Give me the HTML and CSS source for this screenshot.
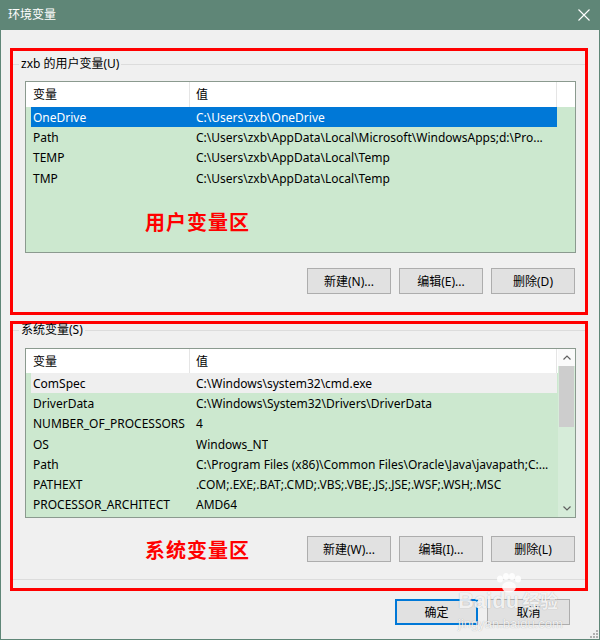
FILE: index.html
```html
<!DOCTYPE html>
<html lang="zh-CN">
<head>
    <meta charset="UTF-8">
    <meta name="viewport" content="width=device-width, initial-scale=1.0">
    <title>环境变量</title>
    <link rel="stylesheet" href="styles.css">
</head>
<body>
    <div class="window">
        <div class="titlebar">
            <span class="title">环境变量</span>
            <svg class="close" width="12" height="12" viewBox="0 0 12 12">
                <path d="M0.5 0.5 L11.5 11.5 M11.5 0.5 L0.5 11.5" stroke="#fff" stroke-width="1.1" fill="none"/>
            </svg>
        </div>

        <div class="content">
            <div class="mark mark-user">
                <fieldset class="group">
                    <legend>zxb 的用户变量(U)</legend>
                    <div class="list">
                        <div class="list-head">
                            <div class="hcol hcol-name">变量</div>
                            <div class="hcol hcol-value">值</div>
                            <div class="hcol hcol-fill"></div>
                        </div>
                        <div class="rows">
                            <div class="row selected"><span class="cell-name">OneDrive</span><span class="cell-value">C:\Users\zxb\OneDrive</span></div>
                            <div class="row"><span class="cell-name">Path</span><span class="cell-value">C:\Users\zxb\AppData\Local\Microsoft\WindowsApps;d:\Pro...</span></div>
                            <div class="row"><span class="cell-name">TEMP</span><span class="cell-value">C:\Users\zxb\AppData\Local\Temp</span></div>
                            <div class="row"><span class="cell-name">TMP</span><span class="cell-value">C:\Users\zxb\AppData\Local\Temp</span></div>
                        </div>
                        <div class="zone-label zone-label-user">用户变量区</div>
                    </div>
                    <div class="buttons">
                        <button class="btn">新建(N)...</button>
                        <button class="btn">编辑(E)...</button>
                        <button class="btn">删除(D)</button>
                    </div>
                </fieldset>
            </div>

            <div class="mark mark-system">
                <fieldset class="group group-system">
                    <legend>系统变量(S)</legend>
                    <div class="list list-system">
                        <div class="list-main">
                            <div class="list-head">
                                <div class="hcol hcol-name">变量</div>
                                <div class="hcol hcol-value">值</div>
                            </div>
                            <div class="rows">
                                <div class="row inactive"><span class="cell-name">ComSpec</span><span class="cell-value">C:\Windows\system32\cmd.exe</span></div>
                                <div class="row"><span class="cell-name">DriverData</span><span class="cell-value">C:\Windows\System32\Drivers\DriverData</span></div>
                                <div class="row"><span class="cell-name">NUMBER_OF_PROCESSORS</span><span class="cell-value">4</span></div>
                                <div class="row"><span class="cell-name">OS</span><span class="cell-value">Windows_NT</span></div>
                                <div class="row"><span class="cell-name">Path</span><span class="cell-value">C:\Program Files (x86)\Common Files\Oracle\Java\javapath;C:...</span></div>
                                <div class="row"><span class="cell-name">PATHEXT</span><span class="cell-value">.COM;.EXE;.BAT;.CMD;.VBS;.VBE;.JS;.JSE;.WSF;.WSH;.MSC</span></div>
                                <div class="row"><span class="cell-name">PROCESSOR_ARCHITECT</span><span class="cell-value">AMD64</span></div>
                            </div>
                        </div>
                        <div class="vscroll">
                            <div class="arrow arrow-up">
                                <svg width="8" height="5" viewBox="0 0 8 5"><path d="M0.5 4.5 L4 1 L7.5 4.5" stroke="#606060" stroke-width="1.2" fill="none"/></svg>
                            </div>
                            <div class="thumb"></div>
                            <div class="track"></div>
                            <div class="arrow arrow-down">
                                <svg width="8" height="5" viewBox="0 0 8 5"><path d="M0.5 0.5 L4 4 L7.5 0.5" stroke="#606060" stroke-width="1.2" fill="none"/></svg>
                            </div>
                        </div>
                    </div>
                    <div class="buttons">
                        <div class="zone-label zone-label-system">系统变量区</div>
                        <button class="btn">新建(W)...</button>
                        <button class="btn">编辑(I)...</button>
                        <button class="btn">删除(L)</button>
                    </div>
                </fieldset>
            </div>

            <div class="actions">
                <button class="btn btn-default">确定</button>
                <button class="btn">取消</button>
            </div>

            <svg class="grip" width="10" height="10" viewBox="0 0 10 10">
                <rect x="8" y="2" width="2" height="2" fill="#b0b0b0"/>
                <rect x="5" y="5" width="2" height="2" fill="#b0b0b0"/>
                <rect x="8" y="5" width="2" height="2" fill="#b0b0b0"/>
                <rect x="2" y="8" width="2" height="2" fill="#b0b0b0"/>
                <rect x="5" y="8" width="2" height="2" fill="#b0b0b0"/>
                <rect x="8" y="8" width="2" height="2" fill="#b0b0b0"/>
            </svg>
        </div>

        <div class="watermark">
            <svg class="paw" width="32" height="20" viewBox="0 0 32 20">
                <ellipse cx="8" cy="6" rx="3" ry="3.5" fill="rgba(255,255,255,0.85)"/>
                <ellipse cx="14" cy="3.5" rx="3" ry="3.5" fill="rgba(255,255,255,0.85)"/>
                <ellipse cx="20" cy="3.5" rx="3" ry="3.5" fill="rgba(255,255,255,0.85)"/>
                <ellipse cx="26" cy="6" rx="3" ry="3.5" fill="rgba(255,255,255,0.85)"/>
                <ellipse cx="17" cy="14" rx="7" ry="5.5" fill="rgba(255,255,255,0.85)"/>
            </svg>
            <div class="wm-brand">Baidu<span class="wm-cn">经验</span></div>
            <div class="wm-url">jingyan.baidu.com</div>
        </div>
    </div>
</body>
</html>
```

FILE: styles.css
```css
* {
    box-sizing: border-box;
}

body {
    margin: 0;
    font-family: "Noto Sans", "Noto Sans CJK SC", sans-serif;
    font-size: 12px;
    color: #000;
}

.window {
    width: 600px;
    height: 640px;
    display: flex;
    flex-direction: column;
    position: relative;
    overflow: hidden;
}

.titlebar {
    height: 30px;
    flex-shrink: 0;
    background-color: #5f8677;
    color: #fff;
    display: flex;
    align-items: center;
    justify-content: space-between;
    padding: 0 10px 0 8px;
}

.title {
    font-size: 12px;
    line-height: 14px;
}

.content {
    flex: 1;
    background-color: #f0f0f0;
    border: 1px solid #5f8677;
    border-top: none;
    padding: 18px 0 0 9px;
    position: relative;
}

/* red annotation frames */
.mark {
    width: 578px;
    border: 3px solid #ff0000;
}

.mark-user {
    padding-top: 7px;
}

.mark-system {
    margin-top: 6px;
    padding-bottom: 8px;
}

/* group boxes */
.group {
    margin: 0;
    min-width: 0;
    border: none;
    border-top: 1px solid #dcdcdc;
    padding: 11px 9px 18px 12px;
}

.group-system {
    border-bottom: 1px solid #dcdcdc;
    padding-top: 12px;
    padding-bottom: 16px;
}

legend {
    padding: 0 2px;
    margin-left: -6px;
    font-size: 12px;
    line-height: 12px;
    color: #000;
}

/* list views */
.list {
    position: relative;
    height: 172px;
    border: 1px solid #8b9a8f;
    background-color: #cce8cf;
    overflow: hidden;
}

.list-system {
    height: 170px;
    display: flex;
}

.list-main {
    flex: 1;
    min-width: 0;
}

.list-head {
    display: flex;
    height: 25px;
    background-color: #fff;
}

.list-system .list-head {
    height: 24px;
}

.hcol {
    height: 100%;
    line-height: 25px;
    border-right: 1px solid #e5e5e5;
    white-space: nowrap;
}

.hcol-name {
    width: 164px;
    padding-left: 7px;
}

.hcol-value {
    width: 367px;
    padding-left: 6px;
}

.hcol-fill {
    flex: 1;
    border-right: none;
}

.rows {
    padding-left: 5px;
}

.row {
    width: 526px;
    height: 20.2px;
    padding-top: 1px;
    line-height: 19.2px;
    display: flex;
    white-space: nowrap;
    overflow: hidden;
}

.row.selected {
    background-color: #0078d7;
    color: #fff;
}

.row.inactive {
    background-color: #efefef;
}

.cell-name {
    width: 159px;
    flex-shrink: 0;
    padding-left: 2px;
    overflow: hidden;
}

.cell-value {
    padding-left: 6px;
    overflow: hidden;
}

/* scrollbar */
.vscroll {
    width: 17px;
    flex-shrink: 0;
    display: flex;
    flex-direction: column;
    background-color: #d6ecd9;
}

.arrow {
    height: 17px;
    display: flex;
    align-items: center;
    justify-content: center;
}

.arrow-up {
    background-color: #fafafa;
}

.thumb {
    height: 61px;
    margin: 0 1px;
    background-color: #cdcdcd;
}

.track {
    flex: 1;
}

/* annotation labels */
.zone-label {
    color: #ff0000;
    font-size: 20px;
    font-weight: bold;
    line-height: 24px;
    letter-spacing: 1px;
    white-space: nowrap;
}

.zone-label-user {
    position: absolute;
    left: 119px;
    top: 129px;
}

.zone-label-system {
    margin: 4px auto 0 120px;
}

/* buttons */
.buttons {
    display: flex;
    justify-content: flex-end;
    align-items: center;
    gap: 8px;
    margin-top: 15px;
    padding-right: 1px;
}

.group-system .buttons {
    margin-top: 17px;
}

.btn {
    width: 84px;
    height: 26px;
    padding: 0;
    border: 1px solid #adadad;
    background-color: #e1e1e1;
    font-family: inherit;
    font-size: 12px;
    color: #000;
}

.actions {
    display: flex;
    justify-content: flex-end;
    gap: 9px;
    margin-top: 8px;
    padding-right: 29px;
}

.actions .btn {
    width: 83px;
}

.btn-default {
    border: 2px solid #0078d7;
}

.grip {
    position: absolute;
    right: 1px;
    bottom: 1px;
}

/* baidu watermark over the corner */
.watermark {
    position: absolute;
    left: 458px;
    top: 573px;
    width: 120px;
    color: rgba(255, 255, 255, 0.85);
    text-shadow: 0 0 1px rgba(0, 0, 0, 0.3);
    pointer-events: none;
}

.paw {
    display: block;
    margin-left: 34px;
}

.wm-brand {
    font-family: "Liberation Sans", sans-serif;
    font-size: 22px;
    font-weight: bold;
    line-height: 18px;
    margin-top: -2px;
}

.wm-cn {
    font-family: "Noto Sans CJK SC", sans-serif;
    font-size: 18px;
    margin-left: 3px;
}

.wm-url {
    font-family: "Liberation Sans", sans-serif;
    font-size: 13px;
    line-height: 16px;
    margin-top: 6px;
}
```
